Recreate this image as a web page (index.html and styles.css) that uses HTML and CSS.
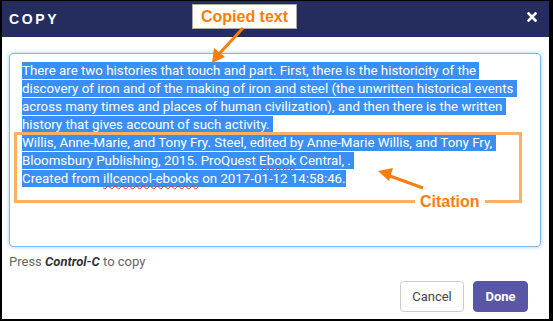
FILE: index.html
```html
<!DOCTYPE html>
<html lang="en">
<head>
    <meta charset="utf-8">
    <title>Copy</title>
    <link rel="stylesheet" href="styles.css">
</head>
<body>
    <div class="dialog">
        <!-- Header -->
        <div class="header">
            <div class="title">COPY</div>
            <svg class="close" width="10" height="10" viewBox="0 0 10 10">
                <path d="M1.5 1.5 L8.5 8.5 M8.5 1.5 L1.5 8.5" stroke="#fff" stroke-width="2.6" stroke-linecap="square"/>
            </svg>
        </div>

        <!-- Body -->
        <div class="body">
            <div class="textarea">
                <span class="sel">There are two histories that touch and part. First, there is the historicity of the&nbsp;</span><br>
                <span class="sel">discovery of iron and of the making of iron and steel (the unwritten historical events&nbsp;</span><br>
                <span class="sel">across many times and places of human civilization), and then there is the written&nbsp;</span><br>
                <span class="sel">history that gives account of such activity.&nbsp;</span><br>
                <span class="sel">Willis, Anne-Marie, and Tony Fry. Steel, edited by Anne-Marie Willis, and Tony Fry,&nbsp;</span><br>
                <span class="sel">Bloomsbury Publishing, 2015. ProQuest <span class="typo">Ebook</span> Central, .&nbsp;</span><br>
                <span class="sel">Created from <span class="typo">illcencol-ebooks</span> on 2017-01-12 14:58:46.</span>
            </div>
            <p class="hint">Press <b><i>Control-C</i></b> to copy</p>
        </div>

        <!-- Footer -->
        <div class="footer">
            <button class="btn btn-cancel">Cancel</button>
            <button class="btn btn-done">Done</button>
        </div>

        <!-- Annotations -->
        <div class="note note-copied">Copied text</div>
        <div class="cite-box"></div>
        <div class="note-cite">Citation</div>
        <svg class="arrows" width="547" height="318" viewBox="0 0 547 318">
            <line x1="241" y1="27" x2="217" y2="53" stroke="#fb7d0c" stroke-width="3"/>
            <polygon points="210,62 212,47 223,56" fill="#fb7d0c"/>
            <line x1="421" y1="187" x2="388" y2="175" stroke="#fb7d0c" stroke-width="3"/>
            <polygon points="376,170 391,167 387,180" fill="#fb7d0c"/>
        </svg>
    </div>
</body>
</html>
```

FILE: styles.css
```css
* {
    box-sizing: border-box;
}

body {
    margin: 0;
    background: #000;
    font-family: Roboto, "Liberation Sans", sans-serif;
}

.dialog {
    position: relative;
    margin: 1px 4px 2px 2px;
    height: 318px;
    background: #fff;
    display: flex;
    flex-direction: column;
}

/* Header */
.header {
    height: 36px;
    background: #242d5e;
    display: flex;
    align-items: center;
    justify-content: space-between;
    padding: 0 12px 0 7px;
}

.title {
    color: #fff;
    font-family: "Liberation Sans", Arial, sans-serif;
    font-weight: 700;
    font-size: 14px;
    letter-spacing: 2.6px;
}

.close {
    margin-top: -4px;
}

/* Body */
.body {
    padding: 16px 8px 0 7px;
}

.textarea {
    height: 194px;
    border: 1px solid #7db5ec;
    border-radius: 4px;
    box-shadow: 0 0 4px rgba(102, 175, 233, 0.6);
    padding: 8px 12px;
    font-size: 13.3px;
    line-height: 18px;
    color: #fff;
    white-space: nowrap;
}

.sel {
    background: #3a8ff7;
    padding: 1.4px 0;
}

.typo {
    text-decoration: underline wavy #e0301e;
    text-decoration-thickness: 1px;
    text-underline-offset: 2px;
}

.hint {
    margin: 7px 0 0;
    font-size: 13px;
    line-height: 16px;
    color: #666;
}

.hint b {
    color: #333;
}

/* Footer */
.footer {
    margin-top: auto;
    display: flex;
    justify-content: flex-end;
    gap: 9px;
    padding: 0 21px 7px 0;
}

.btn {
    height: 31px;
    border-radius: 4px;
    font-family: Roboto, sans-serif;
    font-size: 13px;
    padding: 0 8px;
}

.btn-cancel {
    width: 64px;
    background: #fff;
    border: 1px solid #ccc;
    color: #444;
}

.btn-done {
    width: 55px;
    background: #5957a5;
    border: 1px solid #5957a5;
    color: #fff;
    font-weight: 700;
}

/* Annotations */
.note {
    position: absolute;
    left: 190px;
    top: 3px;
    width: 105px;
    height: 25px;
    background: #fff;
    border: 1px solid #aaa;
    color: #fb7d0c;
    font-family: "Liberation Sans", Arial, sans-serif;
    font-weight: 700;
    font-size: 16px;
    line-height: 23px;
    text-align: center;
}

.cite-box {
    position: absolute;
    left: 12px;
    top: 131px;
    width: 508px;
    height: 71px;
    border: 3.5px solid #fdb063;
}

.note-cite {
    position: absolute;
    left: 413px;
    top: 191px;
    padding: 0 5px;
    background: #fff;
    color: #fb7d0c;
    font-family: "Liberation Sans", Arial, sans-serif;
    font-weight: 700;
    font-size: 16px;
    line-height: 20px;
}

.arrows {
    position: absolute;
    left: 0;
    top: 0;
    pointer-events: none;
}
```
